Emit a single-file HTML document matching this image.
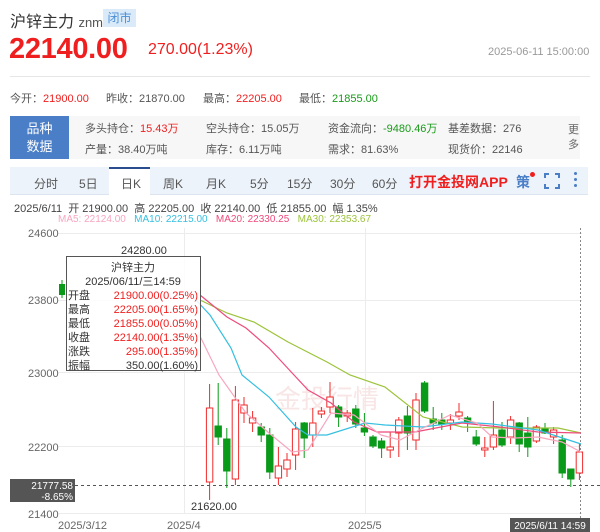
<!DOCTYPE html>
<html><head><meta charset="utf-8"><style>
*{margin:0;padding:0;box-sizing:border-box}
body{width:600px;height:532px;background:#fff;font-family:"Liberation Sans","Noto Sans CJK SC",sans-serif;position:relative;overflow:hidden;color:#333}
.a{position:absolute;white-space:nowrap}
.r{color:#f01f1f}.g{color:#1a9a1a}
</style></head><body>
<div class="a" style="left:10px;top:8px;font-size:16px;color:#333">沪锌主力 <span style="font-size:13px;color:#555">znm</span></div>
<div class="a" style="left:103px;top:9px;width:33px;height:18px;background:#dbeaf8;color:#4a8fd6;font-size:12px;line-height:18px;text-align:center">闭市</div>
<div class="a r" style="left:9px;top:33px;font-size:29px;font-weight:bold;letter-spacing:-0.3px">22140.00</div>
<div class="a r" style="left:148px;top:41px;font-size:16px">270.00(1.23%)</div>
<div class="a" style="left:488px;top:46px;font-size:11px;color:#999">2025-06-11 15:00:00</div>
<div class="a" style="left:10px;top:76px;width:580px;height:1px;background:#e6e6e6"></div>
<div class="a" style="left:10px;top:90px;font-size:11px;color:#555">今开：<span class="r">21900.00</span></div>
<div class="a" style="left:106px;top:90px;font-size:11px;color:#555">昨收：21870.00</div>
<div class="a" style="left:203px;top:90px;font-size:11px;color:#555">最高：<span class="r">22205.00</span></div>
<div class="a" style="left:299px;top:90px;font-size:11px;color:#555">最低：<span class="g">21855.00</span></div>
<div class="a" style="left:10px;top:116px;width:570px;height:43px;background:#f7f7f7"></div>
<div class="a" style="left:10px;top:116px;width:59px;height:43px;background:#4a7ec7;color:#fff;font-size:13px;line-height:18px;text-align:center;padding-top:4px">品种<br>数据</div>
<div class="a" style="left:85px;top:120px;font-size:11px;color:#555">多头持仓：<span class="r">15.43万</span></div>
<div class="a" style="left:206px;top:120px;font-size:11px;color:#555">空头持仓：15.05万</div>
<div class="a" style="left:328px;top:120px;font-size:11px;color:#555">资金流向：<span class="g">-9480.46万</span></div>
<div class="a" style="left:448px;top:120px;font-size:11px;color:#555">基差数据：276</div>
<div class="a" style="left:85px;top:141px;font-size:11px;color:#555">产量：38.40万吨</div>
<div class="a" style="left:206px;top:141px;font-size:11px;color:#555">库存：6.11万吨</div>
<div class="a" style="left:328px;top:141px;font-size:11px;color:#555">需求：81.63%</div>
<div class="a" style="left:448px;top:141px;font-size:11px;color:#555">现货价：22146</div>
<div class="a" style="left:568px;top:123px;font-size:11px;color:#666;line-height:15px;width:12px;white-space:normal">更多</div>
<div class="a" style="left:10px;top:167px;width:578px;height:28px;background:#edf3fb;border-bottom:1px solid #dbe4ef"></div>
<div class="a" style="left:109px;top:167px;width:41px;height:28px;background:#fff;border-top:2px solid #2a4d8f"></div>
<div class="a" style="left:0;top:175px;font-size:12px;color:#555;width:400px">
<span class="a" style="left:34px">分时</span><span class="a" style="left:79px">5日</span><span class="a" style="left:121px">日K</span><span class="a" style="left:163px">周K</span><span class="a" style="left:206px">月K</span><span class="a" style="left:250px">5分</span><span class="a" style="left:287px">15分</span><span class="a" style="left:330px">30分</span><span class="a" style="left:372px">60分</span></div>
<div class="a r" style="left:409px;top:172px;font-size:14px;font-weight:bold">打开金投网APP</div>
<div class="a" style="left:516px;top:172px;font-size:14px;color:#4a7ec7;font-weight:bold">策</div>
<div class="a" style="left:530px;top:172px;width:5px;height:5px;border-radius:50%;background:#f01f1f"></div>
<svg class="a" style="left:544px;top:173px" width="16" height="16" viewBox="0 0 16 16" fill="none" stroke="#4a7ec7" stroke-width="2"><path d="M1 5V1h4M11 1h4v4M15 11v4h-4M5 15H1v-4"/></svg>
<div class="a" style="left:574px;top:172px;width:3px;height:3px;background:#4a7ec7;box-shadow:0 6px 0 #4a7ec7,0 12px 0 #4a7ec7;border-radius:50%"></div>
<div class="a" style="left:14px;top:200px;font-size:11px;color:#444">2025/6/11&nbsp; 开 21900.00&nbsp; 高 22205.00&nbsp; 收 22140.00&nbsp; 低 21855.00&nbsp; 幅 1.35%</div>
<div class="a" style="left:58px;top:214px;font-size:10px"><span style="color:#f7a6bf">MA5: 22124.00</span>&nbsp;&nbsp; <span style="color:#35bfe0">MA10: 22215.00</span>&nbsp;&nbsp; <span style="color:#ee4b7c">MA20: 22330.25</span>&nbsp;&nbsp; <span style="color:#9cc33a">MA30: 22353.67</span></div>
<svg class="a" style="left:0;top:0" width="600" height="532" viewBox="0 0 600 532">
<g stroke="#ececec" stroke-width="1">
<line x1="58" y1="233.5" x2="582" y2="233.5"/><line x1="58" y1="300.5" x2="582" y2="300.5"/><line x1="58" y1="372.5" x2="582" y2="372.5"/><line x1="58" y1="446.5" x2="582" y2="446.5"/><line x1="58" y1="513.5" x2="582" y2="513.5"/>
<line x1="184.5" y1="228" x2="184.5" y2="513"/><line x1="365.5" y1="228" x2="365.5" y2="513"/>
</g>
<line x1="580.5" y1="228" x2="580.5" y2="518" stroke="#888" stroke-dasharray="2,2"/>
<g font-size="11" fill="#666" font-family="Liberation Sans">
<text x="28" y="237">24600</text><text x="28" y="304">23800</text><text x="28" y="377">23000</text><text x="28" y="451">22200</text><text x="28" y="518">21400</text>
<text x="58" y="529">2025/3/12</text><text x="167" y="529">2025/4</text><text x="348" y="529">2025/5</text>
<text x="121" y="254" fill="#333">24280.00</text><text x="191" y="510" fill="#333">21620.00</text>
</g>
<text x="275" y="408" font-size="26" fill="#f8e6e6" font-family="Noto Sans CJK SC">金投行情</text>
<g id="c"></g>
<rect x="59" y="284" width="6" height="11" fill="#0a9a1a"/><line x1="62" y1="280" x2="62" y2="298" stroke="#0a9a1a"/>
<polyline fill="none" stroke="#9cc33a" stroke-width="1.2" points="200,300 227,313 254,322 288,342 327,362 350,375 385,387 423,417 462,427 500,428 558,428 581,433"/>
<polyline fill="none" stroke="#ee4b7c" stroke-width="1.2" points="200,295 227,317 246,328 269,348 294,375 308,390 331,403 354,422 377,432 415,432 462,423 500,427 538,432 581,433"/>
<polyline fill="none" stroke="#35bfe0" stroke-width="1.2" points="196,300 210,315 231,348 242,375 269,397 296,427 308,435 327,435 365,423 385,425 423,427 462,422 492,424 538,430 581,444"/>
<polyline fill="none" stroke="#f7a6bf" stroke-width="1.2" points="198,332 219,375 246,413 269,433 292,452 308,450 331,413 354,415 381,435 400,440 423,428 450,415 477,423 492,437 515,438 538,437 562,442 581,452"/>
<rect x="66.5" y="256.5" width="134" height="114" fill="rgba(255,255,255,0.85)" stroke="#555"/>
<g font-size="11" font-family="Liberation Sans,Noto Sans CJK SC,sans-serif">
<text x="133" y="271" text-anchor="middle" fill="#333">沪锌主力</text>
<text x="133" y="285" text-anchor="middle" fill="#333">2025/06/11/三14:59</text>
<text x="68" y="299" fill="#333">开盘</text><text x="198" y="299" text-anchor="end" fill="#f01f1f">21900.00(0.25%)</text>
<text x="68" y="313" fill="#333">最高</text><text x="198" y="313" text-anchor="end" fill="#f01f1f">22205.00(1.65%)</text>
<text x="68" y="327" fill="#333">最低</text><text x="198" y="327" text-anchor="end" fill="#f01f1f">21855.00(0.05%)</text>
<text x="68" y="341" fill="#333">收盘</text><text x="198" y="341" text-anchor="end" fill="#f01f1f">22140.00(1.35%)</text>
<text x="68" y="355" fill="#333">涨跌</text><text x="198" y="355" text-anchor="end" fill="#f01f1f">295.00(1.35%)</text>
<text x="68" y="369" fill="#333">振幅</text><text x="198" y="369" text-anchor="end" fill="#333">350.00(1.60%)</text>
</g>
<line x1="75" y1="485.5" x2="600" y2="485.5" stroke="#555" stroke-dasharray="3,3"/>
<rect x="10" y="479" width="65" height="23" fill="#555"/>
<text x="73" y="489" font-size="10" fill="#fff" text-anchor="end" font-family="Liberation Sans">21777.58</text>
<text x="73" y="500" font-size="10" fill="#fff" text-anchor="end" font-family="Liberation Sans">-8.65%</text>
<rect x="510" y="518" width="80" height="14" fill="#555"/>
<text x="550" y="529" font-size="10" fill="#fff" text-anchor="middle" font-family="Liberation Sans">2025/6/11 14:59</text>
</svg>
<script>
var d=[["r",408,482,384,500],["g",426,437,383,445],["g",439,471,428,488],["r",400,479,386,485],["r",405,413,397,423],["r",418,423,411,432],["g",427,435,423,442],["g",435,472,428,479],["r",466,478,447,485],["r",460,469,453,477],["r",429,455,422,470],["g",423,438,422,458],["r",423,435,408,447],["r",411,414,407,418],["r",397,407,382,413],["g",407,417,405,427],["r",413,416,410,422],["g",409,424,405,428],["g",428,432,413,436],["g",437,446,435,448],["g",441,448,438,458],["r",447,450,432,458],["r",420,433,417,457],["g",416,433,406,450],["r",400,440,393,450],["g",383,411,381,413],["g",419,423,407,430],["g",420,424,413,430],["r",420,423,414,430],["r",412,416,403,420],["g",418,422,416,432],["g",437,444,430,446],["r",448,450,437,457],["r",435,447,401,450],["g",430,445,422,447],["r",420,437,416,444],["g",423,444,422,452],["g",433,447,417,457],["r",427,441,425,443],["g",429,433,423,434],["r",430,437,427,444],["g",440,473,435,478],["g",469,479,469,487],["r",452,473,443,480]];
var s="";d.forEach(function(c,i){var x=209.6+i*8.6,col=c[0]=="r"?"#f02a2a":"#0a9a1a";
s+='<line x1="'+x+'" y1="'+c[3]+'" x2="'+x+'" y2="'+c[4]+'" stroke="'+col+'"/>';
s+='<rect x="'+(x-3.2)+'" y="'+c[1]+'" width="6.4" height="'+Math.max(2,c[2]-c[1])+'" fill="'+(c[0]=="r"?"#fff":col)+'" stroke="'+col+'"/>';});
document.getElementById("c").innerHTML=s;
</script>
</body></html>
